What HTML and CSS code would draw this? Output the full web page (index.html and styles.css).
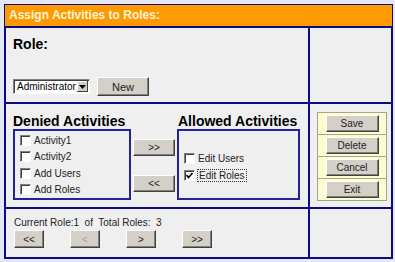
FILE: index.html
```html
<!DOCTYPE html>
<html lang="en">
<head>
    <meta charset="UTF-8">
    <title>Assign Activities to Roles</title>
    <link rel="stylesheet" href="styles.css">
</head>
<body>

<div class="frame">
    <div class="title">Assign Activities to Roles:</div>

    <div class="cell role-cell">
        <h2 class="heading">Role:</h2>
        <div class="role-controls">
            <div class="select">
                <span class="select-value">Administrator</span>
                <span class="select-arrow">
                    <svg width="7" height="4" viewBox="0 0 7 4"><polygon points="0,0 7,0 3.5,4" fill="#000"/></svg>
                </span>
            </div>
            <button class="btn btn-new">New</button>
        </div>
    </div>
    <div class="cell"></div>

    <div class="cell assign-cell">
        <div class="list-col denied">
            <h2 class="heading">Denied Activities</h2>
            <div class="list-box">
                <label class="item"><span class="check"></span>Activity1</label>
                <label class="item"><span class="check"></span>Activity2</label>
                <label class="item"><span class="check"></span>Add Users</label>
                <label class="item"><span class="check"></span>Add Roles</label>
            </div>
        </div>
        <div class="move-col">
            <button class="btn btn-move">&gt;&gt;</button>
            <button class="btn btn-move">&lt;&lt;</button>
        </div>
        <div class="list-col allowed">
            <h2 class="heading">Allowed Activities</h2>
            <div class="list-box centered">
                <label class="item"><span class="check"></span>Edit Users</label>
                <label class="item"><span class="check checked">
                    <svg width="7" height="7" viewBox="0 0 7 7"><polyline points="0.5,3 2.5,5.5 6.5,1" fill="none" stroke="#000" stroke-width="1.6"/></svg>
                </span><span class="focus">Edit Roles</span></label>
            </div>
        </div>
    </div>
    <div class="cell actions-cell">
        <div class="actions">
            <div class="action-row"><button class="btn btn-action">Save</button></div>
            <div class="action-row"><button class="btn btn-action">Delete</button></div>
            <div class="action-row"><button class="btn btn-action">Cancel</button></div>
            <div class="action-row"><button class="btn btn-action">Exit</button></div>
        </div>
    </div>

    <div class="cell nav-cell">
        <p class="nav-info">Current Role:1&nbsp; of&nbsp; Total Roles:&nbsp; 3</p>
        <div class="nav-buttons">
            <button class="btn btn-nav">&lt;&lt;</button>
            <button class="btn btn-nav" disabled>&lt;</button>
            <button class="btn btn-nav">&gt;</button>
            <button class="btn btn-nav">&gt;&gt;</button>
        </div>
    </div>
    <div class="cell"></div>
</div>

</body>
</html>
```

FILE: styles.css
```css
body {
    margin: 0;
    background: #e4e7f6;
    font-family: "Liberation Sans", Arial, sans-serif;
}
.frame {
    display: grid;
    grid-template-columns: 302px 81px;
    grid-template-rows: 20px 74px 103px 48px;
    gap: 2px;
    padding: 2px;
    margin: 4px 0 0 4px;
    width: 385px;
    background: #0c0c80;
}
.title {
    grid-column: 1 / 3;
    background: #ff9900;
    color: #fff4d8;
    font-size: 12px;
    font-weight: bold;
    line-height: 20px;
    padding-left: 4px;
    margin: -1px -1px 0 -1px;
}
.cell {
    background: #efefef;
}
.heading {
    margin: 0;
    font-size: 14px;
    line-height: 16px;
    font-weight: bold;
    color: #000;
}

/* role row */
.role-cell {
    padding: 8px 0 0 7px;
}
.role-controls {
    display: flex;
    align-items: center;
    gap: 7px;
    margin-top: 25px;
}
.select {
    display: flex;
    align-items: center;
    width: 74px;
    height: 11px;
    padding: 1px 0 1px 1px;
    background: #fff;
    border: 1px solid;
    border-color: #808080 #fff #fff #808080;
    box-shadow: inset 1px 1px #404040;
    font-size: 10px;
    color: #000;
}
.select-value {
    flex: 1;
    padding-left: 2px;
    white-space: nowrap;
}
.select-arrow {
    display: flex;
    align-items: center;
    justify-content: center;
    flex: none;
    width: 11px;
    height: 11px;
    margin-right: 1px;
    background: #d4d0c8;
    box-shadow: inset -1px -1px #404040, inset 1px 1px #fff;
}

/* buttons */
.btn {
    margin: 0;
    padding: 0;
    background: #d4d0c8;
    border: 1px solid;
    border-color: #fff #404040 #404040 #fff;
    box-shadow: inset -1px -1px #808080;
    font-family: "Liberation Sans", Arial, sans-serif;
    font-size: 10px;
    color: #222;
}
.btn:disabled {
    color: #a0a0a0;
}
.btn-new {
    width: 52px;
    height: 19px;
    font-size: 11px;
}

/* assign row */
.assign-cell {
    display: flex;
    padding: 9px 0 0 7px;
}
.denied {
    width: 118px;
}
.allowed {
    width: 123px;
}
.allowed .heading {
    padding-left: 1px;
}
.list-box {
    display: flex;
    flex-direction: column;
    box-sizing: border-box;
    height: 71px;
    padding: 1px 0 0 5px;
    border: 2px solid #22229a;
    background: #efefef;
}
.list-box.centered {
    justify-content: center;
    padding: 5px 0 0 5px;
}
.item {
    display: flex;
    align-items: center;
    height: 16.5px;
    font-size: 10px;
    color: #222;
}
.check {
    display: flex;
    align-items: center;
    justify-content: center;
    width: 9px;
    height: 9px;
    margin-right: 3px;
    background: #fff;
    border: 1px solid;
    border-color: #808080 #fff #fff #808080;
    box-shadow: inset 1px 1px #404040;
}
.focus {
    outline: 1px dotted #333;
    padding: 0 1px;
}
.move-col {
    display: flex;
    flex-direction: column;
    width: 46px;
    align-items: center;
}
.btn-move {
    width: 42px;
    height: 17px;
    margin-top: 26px;
}
.btn-move + .btn-move {
    margin-top: 19px;
}

/* actions column */
.actions-cell {
    padding: 8px 0 0 7px;
}
.actions {
    width: 68px;
    border: 1px solid #a8a48c;
    background: #fdfdd2;
}
.action-row {
    display: flex;
    align-items: center;
    justify-content: center;
    height: 21px;
}
.action-row + .action-row {
    border-top: 1px solid #a8a48c;
}
.btn-action {
    width: 53px;
    height: 17px;
}

/* navigation row */
.nav-cell {
    padding: 8px 0 0 8px;
}
.nav-info {
    margin: 0;
    font-size: 10px;
    line-height: 12px;
    color: #222;
}
.nav-buttons {
    display: flex;
    gap: 26px;
    margin-top: 1px;
}
.btn-nav {
    width: 30px;
    height: 18px;
}
```
